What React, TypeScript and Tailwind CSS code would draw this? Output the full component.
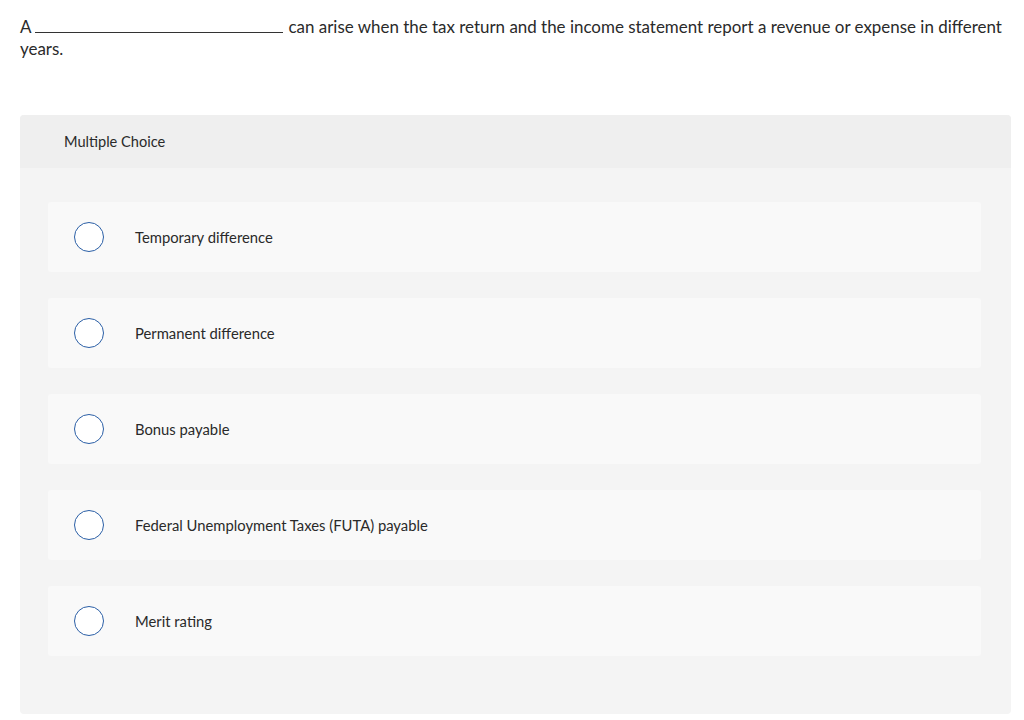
import React from "react";

const options = [
  "Temporary difference",
  "Permanent difference",
  "Bonus payable",
  "Federal Unemployment Taxes (FUTA) payable",
  "Merit rating",
];

export default function App() {
  return (
    <div
      className="w-[1024px] h-[720px] bg-white text-[#2a2a2a] overflow-hidden"
      style={{ fontFamily: "Lato, 'Open Sans', sans-serif" }}
    >
      <p className="pl-[20px] pr-[20px] pt-[16px] text-[16.95px] leading-[22px] text-[#2a2a2a]">
        A<span className="inline-block w-[248px] ml-[4px] mr-[5px] border-b border-[#333] align-baseline h-[4px]"></span>can arise when the tax return and the income statement report a revenue or expense in different
        years.
      </p>
      <div className="mx-[20px] mt-[55px] w-[991px] rounded-[4px] bg-[#f4f4f4] overflow-hidden">
        <div className="h-[53px] bg-[#efefef] flex items-center pl-[44px] text-[14.6px]">Multiple Choice</div>
        <div className="pt-[34px] pb-[58px] pl-[28px] pr-[30px] flex flex-col gap-[26px]">
          {options.map((o) => (
            <div key={o} className="h-[70px] bg-[#f9f9f9] rounded-[3px] flex items-center pl-[26px]">
              <span className="w-[30px] h-[30px] rounded-full border border-[#2b5fa6] bg-white shrink-0"></span>
              <span className="ml-[31px] text-[14.8px] text-[#2a2a2a]">{o}</span>
            </div>
          ))}
        </div>
      </div>
    </div>
  );
}
